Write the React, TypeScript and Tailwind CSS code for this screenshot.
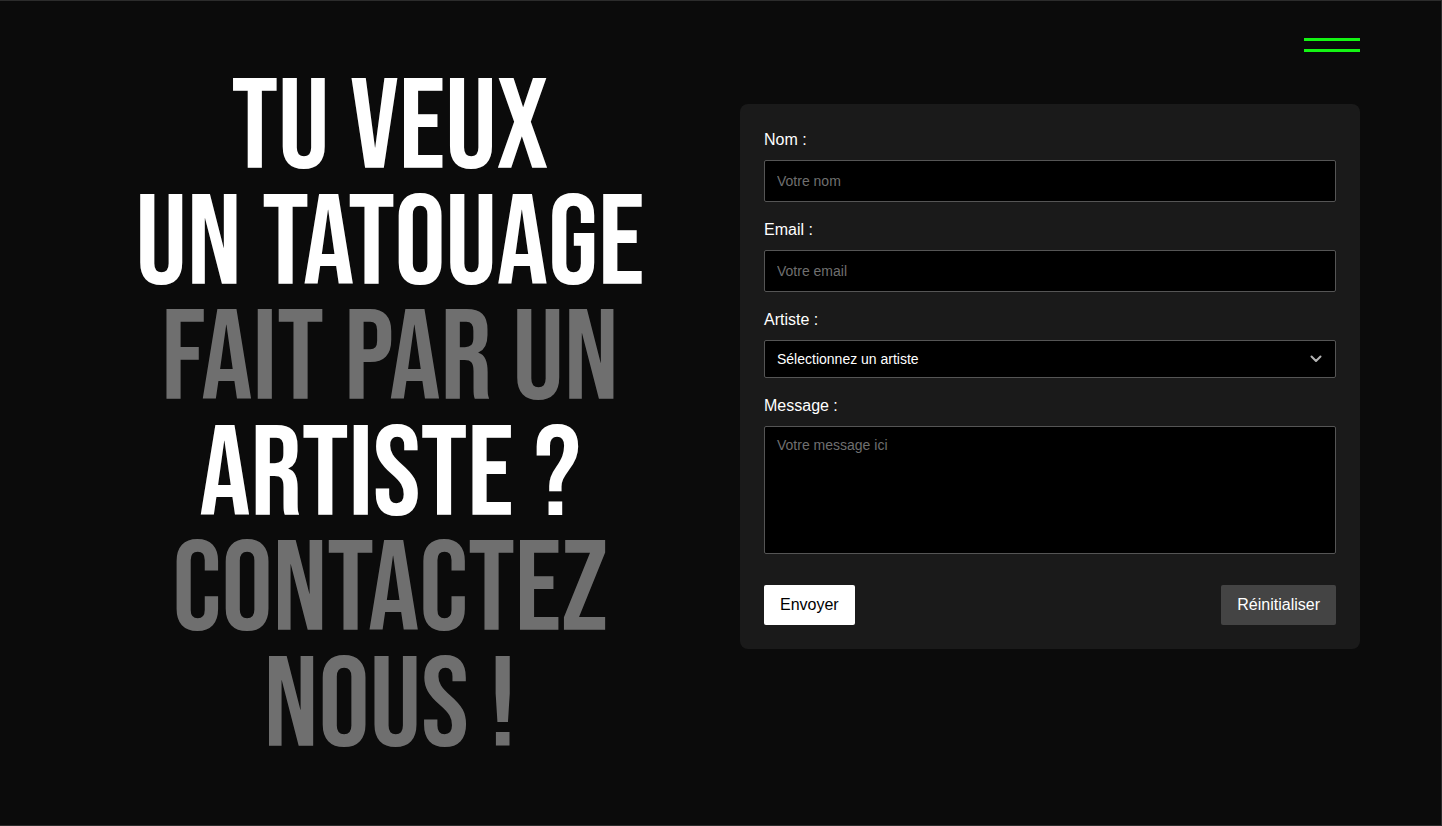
import { useState } from "react";

export default function App() {
  const [nom, setNom] = useState("");
  const [email, setEmail] = useState("");
  const [artiste, setArtiste] = useState("");
  const [message, setMessage] = useState("");

  const reset = () => {
    setNom("");
    setEmail("");
    setArtiste("");
    setMessage("");
  };

  return (
    <div className="w-full h-[826px] bg-[#0b0b0b] border-t border-r border-b border-[#2c2c2c] overflow-hidden font-['Liberation_Sans',Arial,sans-serif]">
      {/* header : burger */}
      <div className="flex justify-end pl-[80px] pr-[81px] pt-[37px]">
        <button className="w-[56px] flex flex-col gap-[8px]">
          <span className="block h-[3px] w-full bg-[#14f514]" />
          <span className="block h-[3px] w-full bg-[#14f514]" />
        </button>
      </div>

      <div className="grid grid-cols-2 gap-[40px] pl-[80px] pr-[81px] mt-[52px]">
        {/* titre */}
        <h1 className="text-center font-['Bebas_Neue',sans-serif] font-normal text-[128px] leading-[115.5px] text-white -mt-[32px]">
          <span className="block">TU VEUX</span>
          <span className="block">UN TATOUAGE</span>
          <span className="block text-[#6f6f6f]">FAIT PAR UN</span>
          <span className="block">ARTISTE ?</span>
          <span className="block text-[#6f6f6f]">CONTACTEZ</span>
          <span className="block text-[#6f6f6f]">NOUS !</span>
        </h1>

        {/* formulaire */}
        <form
          className="self-start bg-[#1a1a1a] rounded-lg p-6 text-white"
          onSubmit={(e) => e.preventDefault()}
        >
          <label className="block text-base leading-6 mb-2">Nom :</label>
          <input
            type="text"
            placeholder="Votre nom"
            value={nom}
            onChange={(e) => setNom(e.target.value)}
            className="block w-full h-[42px] bg-black border border-[#555] rounded-[2px] px-3 text-sm text-white placeholder:text-[#6f6f6f] outline-none mb-4"
          />

          <label className="block text-base leading-6 mb-2">Email :</label>
          <input
            type="email"
            placeholder="Votre email"
            value={email}
            onChange={(e) => setEmail(e.target.value)}
            className="block w-full h-[42px] bg-black border border-[#555] rounded-[2px] px-3 text-sm text-white placeholder:text-[#6f6f6f] outline-none mb-4"
          />

          <label className="block text-base leading-6 mb-2">Artiste :</label>
          <div className="relative mb-4">
            <select
              value={artiste}
              onChange={(e) => setArtiste(e.target.value)}
              className="block w-full h-[38px] appearance-none bg-black border border-[#555] rounded-[2px] px-3 text-sm text-white outline-none"
            >
              <option value="">Sélectionnez un artiste</option>
              <option value="a">Artiste 1</option>
              <option value="b">Artiste 2</option>
            </select>
            <svg
              className="absolute right-[14px] top-1/2 -translate-y-1/2 pointer-events-none"
              width="12"
              height="8"
              viewBox="0 0 12 8"
              fill="none"
            >
              <path d="M1.5 1.5 6 6l4.5-4.5" stroke="#b5b5b5" strokeWidth="2" strokeLinecap="round" strokeLinejoin="round" />
            </svg>
          </div>

          <label className="block text-base leading-6 mb-2">Message :</label>
          <textarea
            placeholder="Votre message ici"
            value={message}
            onChange={(e) => setMessage(e.target.value)}
            className="block w-full h-[128px] resize-none bg-black border border-[#555] rounded-[2px] px-3 py-[8px] text-sm text-white placeholder:text-[#6f6f6f] outline-none"
          />

          <div className="flex justify-between mt-[31px]">
            <button
              type="submit"
              className="h-[40px] px-4 bg-white text-black text-base rounded-[2px]"
            >
              Envoyer
            </button>
            <button
              type="button"
              onClick={reset}
              className="h-[40px] px-4 bg-[#444] text-white text-base rounded-[2px]"
            >
              Réinitialiser
            </button>
          </div>
        </form>
      </div>
    </div>
  );
}
